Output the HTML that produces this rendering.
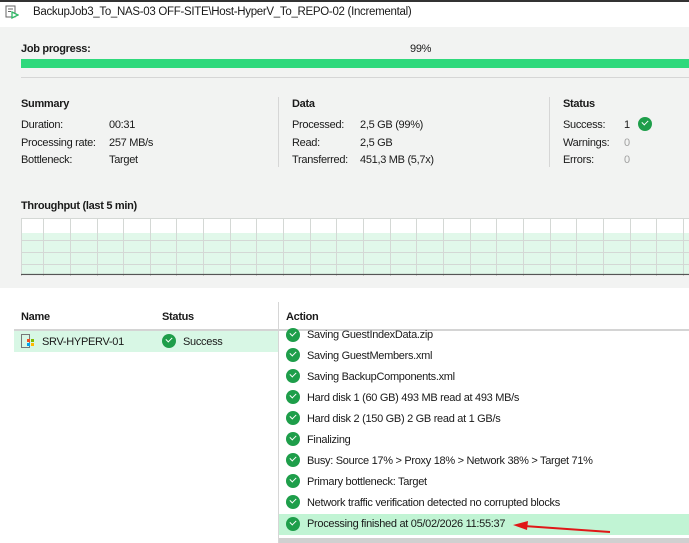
<!DOCTYPE html><html><head><style>
*{margin:0;padding:0;box-sizing:border-box}
body{width:689px;height:543px;overflow:hidden;background:#fff;font-family:"Liberation Sans",sans-serif;font-size:11px;color:#1a1a1a;position:relative;letter-spacing:-0.3px}
.a{position:absolute;white-space:nowrap}
.t{margin-top:1px}
.b{font-weight:bold}
.g{color:#a0a0a0}
.ck{position:absolute;width:14px;height:14px;border-radius:50%;background:#1e9e4a}
.ck:after{content:"";position:absolute;left:4px;top:3px;width:5px;height:3px;border-left:1.6px solid #fff;border-bottom:1.6px solid #fff;transform:rotate(-45deg)}
</style></head><body>
<div class="a" style="left:0;top:0;width:689px;height:2px;background:#333"></div>
<svg class="a" style="left:5px;top:5px" width="14" height="14" viewBox="0 0 14 14"><rect x="1" y="1" width="9" height="11" fill="none" stroke="#666"/><line x1="3" y1="4" x2="8" y2="4" stroke="#666"/><line x1="3" y1="6.5" x2="6" y2="6.5" stroke="#666"/><path d="M7 7 L13 10 L7 13 Z" fill="#fff" stroke="#2fb866" stroke-width="1.3"/></svg>
<div class="a" style="left:33px;top:6px;font-size:11.5px">BackupJob3_To_NAS-03 OFF-SITE\Host-HyperV_To_REPO-02 (Incremental)</div>
<div class="a" style="left:0;top:27px;width:689px;height:261px;background:#f2f3f2"></div>
<div class="a b" style="left:21px;top:43px">Job progress:</div>
<div class="a" style="left:410px;top:43px">99%</div>
<div class="a" style="left:21px;top:59px;width:668px;height:9px;background:#2fd97c"></div>
<div class="a" style="left:21px;top:77px;width:668px;height:1px;background:#d6d6d6"></div>
<div class="a b t" style="left:21px;top:97px">Summary</div>
<div class="a t" style="left:21px;top:118px">Duration:</div><div class="a t" style="left:109px;top:118px">00:31</div>
<div class="a t" style="left:21px;top:136px">Processing rate:</div><div class="a t" style="left:109px;top:136px">257 MB/s</div>
<div class="a t" style="left:21px;top:153px">Bottleneck:</div><div class="a t" style="left:109px;top:153px">Target</div>
<div class="a" style="left:278px;top:97px;width:1px;height:70px;background:#d6d6d6"></div>
<div class="a b t" style="left:292px;top:97px">Data</div>
<div class="a t" style="left:292px;top:118px">Processed:</div><div class="a t" style="left:360px;top:118px">2,5 GB (99%)</div>
<div class="a t" style="left:292px;top:136px">Read:</div><div class="a t" style="left:360px;top:136px">2,5 GB</div>
<div class="a t" style="left:292px;top:153px">Transferred:</div><div class="a t" style="left:360px;top:153px">451,3 MB (5,7x)</div>
<div class="a" style="left:549px;top:97px;width:1px;height:70px;background:#d6d6d6"></div>
<div class="a b t" style="left:563px;top:97px">Status</div>
<div class="a t" style="left:563px;top:118px">Success:</div><div class="a t" style="left:624px;top:118px">1</div><div class="ck" style="left:638px;top:117px"></div>
<div class="a t" style="left:563px;top:136px">Warnings:</div><div class="a g t" style="left:624px;top:136px">0</div>
<div class="a t" style="left:563px;top:153px">Errors:</div><div class="a g t" style="left:624px;top:153px">0</div>
<div class="a b t" style="left:21px;top:199px">Throughput (last 5 min)</div>
<svg class="a" style="left:21px;top:218px" width="668" height="58">
<rect x="0" y="0" width="668" height="58" fill="#fff"/>
<rect x="0" y="15" width="668" height="41" fill="#e1f8ea"/>
<g stroke="#d4d8d5" stroke-width="1">
<line x1="0" y1="0.5" x2="668" y2="0.5"/><line x1="0" y1="22.5" x2="668" y2="22.5"/><line x1="0" y1="34.5" x2="668" y2="34.5"/><line x1="0" y1="46.5" x2="668" y2="46.5"/>
<line x1="0.5" y1="0" x2="0.5" y2="58"/>
<line x1="22.5" y1="0" x2="22.5" y2="58"/><line x1="49.5" y1="0" x2="49.5" y2="58"/><line x1="76.5" y1="0" x2="76.5" y2="58"/><line x1="102.5" y1="0" x2="102.5" y2="58"/><line x1="129.5" y1="0" x2="129.5" y2="58"/><line x1="155.5" y1="0" x2="155.5" y2="58"/><line x1="182.5" y1="0" x2="182.5" y2="58"/><line x1="209.5" y1="0" x2="209.5" y2="58"/><line x1="235.5" y1="0" x2="235.5" y2="58"/><line x1="262.5" y1="0" x2="262.5" y2="58"/><line x1="289.5" y1="0" x2="289.5" y2="58"/><line x1="315.5" y1="0" x2="315.5" y2="58"/><line x1="342.5" y1="0" x2="342.5" y2="58"/><line x1="369.5" y1="0" x2="369.5" y2="58"/><line x1="395.5" y1="0" x2="395.5" y2="58"/><line x1="422.5" y1="0" x2="422.5" y2="58"/><line x1="475.5" y1="0" x2="475.5" y2="58"/><line x1="449.5" y1="0" x2="449.5" y2="58"/><line x1="502.5" y1="0" x2="502.5" y2="58"/><line x1="529.5" y1="0" x2="529.5" y2="58"/><line x1="555.5" y1="0" x2="555.5" y2="58"/><line x1="582.5" y1="0" x2="582.5" y2="58"/><line x1="609.5" y1="0" x2="609.5" y2="58"/><line x1="635.5" y1="0" x2="635.5" y2="58"/><line x1="662.5" y1="0" x2="662.5" y2="58"/>
</g>
<line x1="0" y1="56.5" x2="668" y2="56.5" stroke="#555" stroke-width="1.2"/>
</svg>
<div class="a b t" style="left:21px;top:310px">Name</div>
<div class="a b t" style="left:162px;top:310px">Status</div>
<div class="a b t" style="left:286px;top:310px">Action</div>
<div class="a" style="left:278px;top:302px;width:1px;height:241px;background:#d6d6d6"></div>
<div class="a" style="left:14px;top:329px;width:675px;height:2px;background:#d4d4d4"></div>
<div class="a" style="left:14px;top:331px;width:264px;height:21px;background:#d8f7e5"></div>
<svg class="a" style="left:21px;top:334px" width="14" height="14"><rect x="0.5" y="0.5" width="8" height="13" fill="none" stroke="#777"/><rect x="6" y="5" width="3" height="3" fill="#f25022"/><rect x="10" y="5" width="3" height="3" fill="#7fba00"/><rect x="6" y="9" width="3" height="3" fill="#00a4ef"/><rect x="10" y="9" width="3" height="3" fill="#ffb900"/></svg>
<div class="a t" style="left:42px;top:335px">SRV-HYPERV-01</div>
<div class="ck" style="left:162px;top:334px"></div>
<div class="a t" style="left:183px;top:335px">Success</div>
<div class="a" style="left:279px;top:514px;width:410px;height:21px;background:#c1f4d4"></div>
<div class="a" style="left:279px;top:538px;width:410px;height:5px;background:#d0d0d0"></div>
<div class="ck" style="left:286px;top:328px"></div><div class="a t" style="left:307px;top:328px">Saving GuestIndexData.zip</div>
<div class="ck" style="left:286px;top:348px"></div><div class="a t" style="left:307px;top:349px">Saving GuestMembers.xml</div>
<div class="ck" style="left:286px;top:369px"></div><div class="a t" style="left:307px;top:370px">Saving BackupComponents.xml</div>
<div class="ck" style="left:286px;top:390px"></div><div class="a t" style="left:307px;top:391px">Hard disk 1 (60 GB) 493 MB read at 493 MB/s</div>
<div class="ck" style="left:286px;top:411px"></div><div class="a t" style="left:307px;top:412px">Hard disk 2 (150 GB) 2 GB read at 1 GB/s</div>
<div class="ck" style="left:286px;top:432px"></div><div class="a t" style="left:307px;top:433px">Finalizing</div>
<div class="ck" style="left:286px;top:453px"></div><div class="a t" style="left:307px;top:454px">Busy: Source 17% &gt; Proxy 18% &gt; Network 38% &gt; Target 71%</div>
<div class="ck" style="left:286px;top:474px"></div><div class="a t" style="left:307px;top:475px">Primary bottleneck: Target</div>
<div class="ck" style="left:286px;top:495px"></div><div class="a t" style="left:307px;top:496px">Network traffic verification detected no corrupted blocks</div>
<div class="ck" style="left:286px;top:517px"></div><div class="a t" style="left:307px;top:517px">Processing finished at 05/02/2026 11:55:37</div>
<svg class="a" style="left:510px;top:518px" width="110" height="20"><line x1="14" y1="8" x2="100" y2="14" stroke="#e01818" stroke-width="2"/><path d="M3 7 L18 3 L17 12 Z" fill="#e01818"/></svg>
</body></html>
